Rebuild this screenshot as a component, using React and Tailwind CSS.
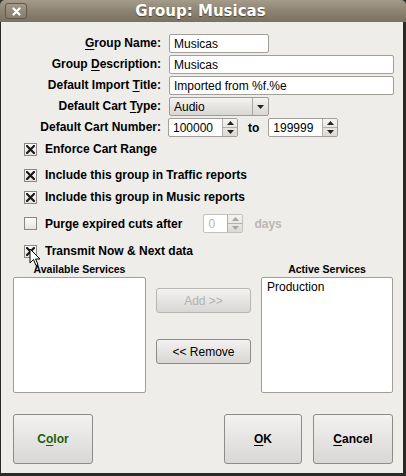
import React from 'react'

const SANS = { fontFamily: '"Liberation Sans", Arial, sans-serif' }

function U({ children }) {
  return <span className="underline underline-offset-[2px]">{children}</span>
}

function Label({ children }) {
  return (
    <div className="w-[161px] shrink-0 pr-[1px] text-right text-[12px] font-bold leading-[19px] text-black">
      {children}
    </div>
  )
}

function TextBox({ value, className = '' }) {
  return (
    <div
      className={`ml-[7px] flex h-[19px] items-center rounded-[2px] border border-[#a39e98] bg-white px-[4px] text-[12px] text-black ${className}`}
    >
      {value}
    </div>
  )
}

function SpinArrows({ disabled }) {
  const c = disabled ? '#a9a6a2' : '#222'
  return (
    <div className="flex h-full w-[15px] flex-col border-l border-[#b3afaa] bg-gradient-to-b from-[#f5f4f2] to-[#dcd9d5]">
      <div className="flex flex-1 items-center justify-center border-b border-[#b3afaa]">
        <svg width="7" height="4" viewBox="0 0 7 4">
          <path d="M0 4 L3.5 0 L7 4 Z" fill={c} />
        </svg>
      </div>
      <div className="flex flex-1 items-center justify-center">
        <svg width="7" height="4" viewBox="0 0 7 4">
          <path d="M0 0 L3.5 4 L7 0 Z" fill={c} />
        </svg>
      </div>
    </div>
  )
}

function SpinBox({ value, width, disabled }) {
  return (
    <div
      className={`flex h-[19px] items-center overflow-hidden rounded-[2px] border bg-white text-[12px] ${
        disabled ? 'border-[#c4c0bb] text-[#b8b5b1]' : 'border-[#a39e98] text-black'
      }`}
      style={{ width }}
    >
      <div className="flex-1 px-[4px]">{value}</div>
      <SpinArrows disabled={disabled} />
    </div>
  )
}

function Check({ checked }) {
  return (
    <div className="flex h-[13px] w-[13px] items-center justify-center border border-[#8a8784] bg-gradient-to-b from-[#fdfdfd] to-[#e6e4e1]">
      {checked && (
        <svg width="9" height="9" viewBox="0 0 9 9">
          <path d="M1 1 L8 8 M8 1 L1 8" stroke="#1a1a1a" strokeWidth="2.2" strokeLinecap="square" />
        </svg>
      )}
    </div>
  )
}

function CheckRow({ checked, children, className = '' }) {
  return (
    <div className={`flex items-center pl-[23px] ${className}`}>
      <Check checked={checked} />
      <span className="ml-[8px] text-[12px] font-bold leading-[14px] text-black">{children}</span>
    </div>
  )
}

function Button({ children, className = '', disabled }) {
  return (
    <div
      className={`flex items-center justify-center rounded-[3px] border bg-gradient-to-b from-[#f3f2f1] to-[#d8d7d6] text-[12px] ${
        disabled ? 'border-[#b8b6b3] text-[#b3b1ae]' : 'border-[#8e8c89] text-black'
      } ${className}`}
    >
      {children}
    </div>
  )
}

export default function App() {
  return (
    <div className="relative h-[476px] w-[406px] overflow-hidden bg-[#2c2a27]" style={SANS}>
      <div className="flex h-[22px] items-center rounded-t-[5px] bg-gradient-to-b from-[#a49b8b] via-[#8c8372] to-[#7a7261] px-[5px]">
        <div className="flex h-[16px] w-[22px] items-center justify-center rounded-[3px] border border-[#5f584c] bg-gradient-to-b from-[#a29988] to-[#857c6b]">
          <svg width="9" height="9" viewBox="0 0 9 9">
            <path d="M1.5 1.5 L7.5 7.5 M7.5 1.5 L1.5 7.5" stroke="#fff" strokeWidth="2.2" strokeLinecap="round" />
          </svg>
        </div>
        <div
          className="flex-1 pr-[27px] text-center text-[15px] font-bold text-white [text-shadow:0_1px_1px_#4a4438]"
          style={{ fontFamily: '"DejaVu Sans", sans-serif' }}
        >
          Group: Musicas
        </div>
      </div>

      <div className="ml-[1px] mr-[3px] flex h-[451px] flex-col bg-[#efedea] pt-[12px]">
        <div className="flex flex-col gap-[2px]">
          <div className="flex">
            <Label>
              <U>G</U>roup Name:
            </Label>
            <TextBox value="Musicas" className="w-[100px]" />
          </div>
          <div className="flex">
            <Label>
              Group <U>D</U>escription:
            </Label>
            <TextBox value="Musicas" className="w-[225px]" />
          </div>
          <div className="flex">
            <Label>
              Default Import <U>T</U>itle:
            </Label>
            <TextBox value="Imported from %f.%e" className="w-[225px]" />
          </div>
          <div className="flex">
            <Label>
              Default Cart <U>T</U>ype:
            </Label>
            <div className="ml-[7px] flex h-[19px] w-[100px] items-center overflow-hidden rounded-[2px] border border-[#9e9a95] bg-gradient-to-b from-[#f4f3f1] to-[#d9d7d4] text-[12px] text-black">
              <div className="flex-1 px-[4px]">Audio</div>
              <div className="flex h-full w-[16px] items-center justify-center border-l border-[#a9a5a0]">
                <svg width="7" height="4" viewBox="0 0 7 4">
                  <path d="M0 0 L3.5 4 L7 0 Z" fill="#222" />
                </svg>
              </div>
            </div>
          </div>
          <div className="flex items-center">
            <Label>Default Cart Number:</Label>
            <div className="ml-[6px]">
              <SpinBox value="100000" width={70} />
            </div>
            <span className="ml-[10px] text-[12px] font-bold">to</span>
            <div className="ml-[9px]">
              <SpinBox value="199999" width={70} />
            </div>
          </div>
        </div>

        <CheckRow checked className="mt-[5px]">Enforce Cart Range</CheckRow>
        <CheckRow checked className="mt-[12px]">Include this group in Traffic reports</CheckRow>
        <CheckRow checked className="mt-[8px]">Include this group in Music reports</CheckRow>
        <div className="mt-[10px] flex h-[19px] items-center">
          <CheckRow checked={false}>Purge expired cuts after</CheckRow>
          <div className="ml-[21px]">
            <SpinBox value="0" width={40} disabled />
          </div>
          <span className="ml-[11px] text-[12px] font-bold text-[#bab7b3]">days</span>
        </div>
        <CheckRow checked className="mt-[11px]">Transmit Now &amp; Next data</CheckRow>

        <div className="mt-[4px] flex pl-[12px] pr-[10px]">
          <div className="flex w-[133px] flex-col">
            <div className="text-center text-[10.5px] font-bold leading-[14px]">Available Services</div>
            <div className="mt-[1px] h-[116px] rounded-[2px] border border-[#a39e98] bg-white" />
          </div>
          <div className="ml-[10px] flex w-[95px] flex-col pt-[26px]">
            <Button disabled className="h-[25px]">Add &gt;&gt;</Button>
            <Button className="mt-[26px] h-[25px]">&lt;&lt; Remove</Button>
          </div>
          <div className="ml-auto flex w-[132px] flex-col">
            <div className="text-center text-[10.5px] font-bold leading-[14px]">Active Services</div>
            <div className="mt-[1px] h-[116px] rounded-[2px] border border-[#a39e98] bg-white px-[5px] text-[12px]">
              Production
            </div>
          </div>
        </div>

        <div className="mt-[21px] flex pl-[12px] pr-[10px]">
          <Button className="h-[50px] w-[80px] font-bold">
            <span className="text-[#1e5e08]">
              C<U>o</U>lor
            </span>
          </Button>
          <Button className="ml-auto h-[50px] w-[78px] font-bold">
            <U>O</U>K
          </Button>
          <Button className="ml-[11px] h-[50px] w-[80px] font-bold">
            <U>C</U>ancel
          </Button>
        </div>
      </div>

      <svg className="absolute left-[29px] top-[248px]" width="12" height="19" viewBox="0 0 12 19">
        <path d="M1 1 L1 15 L4.5 11.5 L7 17.5 L9 16.6 L6.6 11 L11 11 Z" fill="#fff" stroke="#000" strokeWidth="1" strokeLinejoin="round" />
      </svg>
    </div>
  )
}
